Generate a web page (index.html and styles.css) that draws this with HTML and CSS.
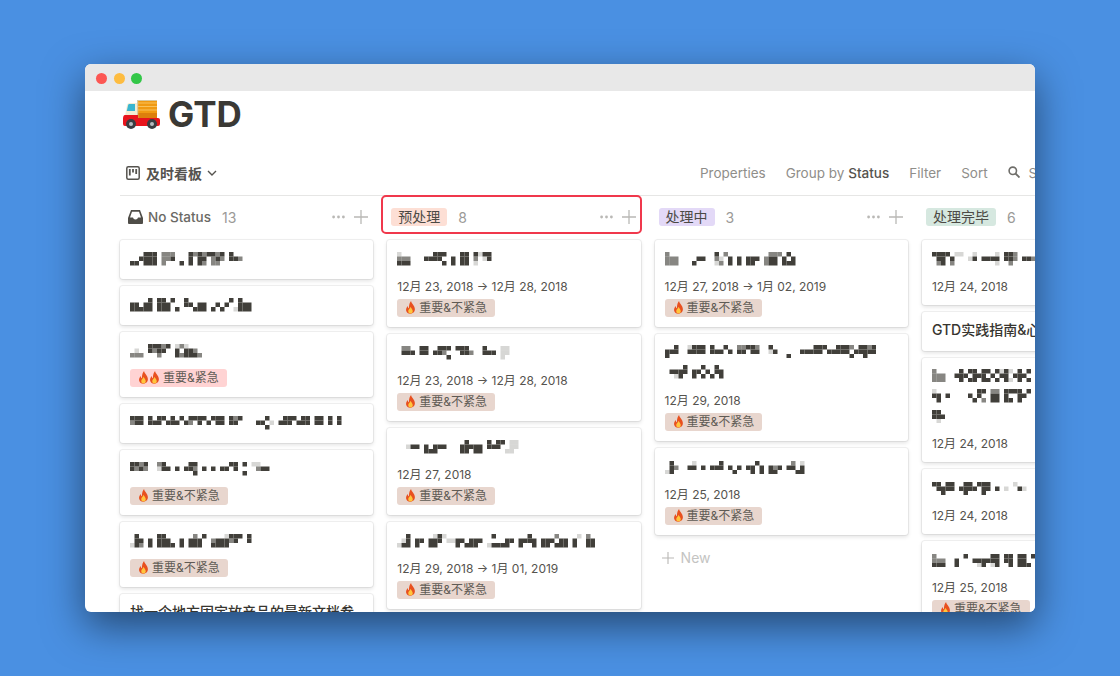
FILE: index.html
```html
<!DOCTYPE html>
<html lang="en">

<head>
    <meta charset="UTF-8" />
    <title>GTD</title>
    <link rel="stylesheet" href="styles.css">
</head>

<body>

    <svg class="defs" width="0" height="0">
        <symbol id="fire" viewBox="0 0 12 14">
            <path fill="#e8501f" d="M6.6 0C7 3 10.800 5 10.800 9a4.900 4.900 0 0 1-9.600 1.200C.9 8 2 6.500 3 5.300c0 1.400.6 2.200 1.400 2.400C4.100 5 4.900 2 6.600 0z" />
            <path fill="#ffc53d" d="M6.100 6.200c.3 1.500 2.400 2.800 2.400 4.800a2.500 2.500 0 0 1-5 0c0-1.900 2.100-3 2.600-4.800z" />
        </symbol>
        <symbol id="plus" viewBox="0 0 14 14">
            <path d="M7 0v14M0 7h14" stroke="#b9b8b5" stroke-width="1.300" fill="none" />
        </symbol>
        <symbol id="dots" viewBox="0 0 13 4">
            <circle cx="1.600" cy="2" r="1.400" fill="#b9b8b5" />
            <circle cx="6.500" cy="2" r="1.400" fill="#b9b8b5" />
            <circle cx="11.400" cy="2" r="1.400" fill="#b9b8b5" />
        </symbol>
    </svg>

    <div class="window">
        <div class="titlebar">
            <span class="light red"></span>
            <span class="light yellow"></span>
            <span class="light green"></span>
        </div>

        <div class="page-title">
            <svg class="truck" width="38" height="30" viewBox="0 0 38 30">
                <rect x="15" y="1" width="20" height="20" fill="#f09a12" />
                <path d="M15 4h20M15 7.500h20M15 11h20" stroke="#f9c25a" stroke-width="1.200" />
                <rect x="15" y="14" width="20" height="6" fill="#dd7f0c" />
                <path d="M15 1h20v1H15zM15 1h1.200v20H15z" fill="#d9c9a0" />
                <path d="M3 17l2-11q.5-2 2.500-2H15v15H3z" fill="#f3ecd2" />
                <path d="M4.800 12l1.300-6q.3-1 1.300-1H13v7z" fill="#39b6d0" />
                <path d="M1 20q0-4 2-4h13v3h20q2 0 2 2v4q0 2-2 2H3q-2 0-2-2z" fill="#e8141c" />
                <circle cx="9" cy="25" r="5" fill="#3a3e42" />
                <circle cx="9" cy="25" r="2" fill="#b7bcc0" />
                <circle cx="30" cy="25" r="5" fill="#3a3e42" />
                <circle cx="30" cy="25" r="2" fill="#b7bcc0" />
            </svg>
            <h1>GTD</h1>
        </div>

        <div class="toolbar">
            <div class="views">
                <svg width="14" height="14" viewBox="0 0 14 14" fill="none">
                    <rect x=".8" y=".8" width="12.400" height="12.400" rx="1.500" stroke="#55534e" stroke-width="1.500" />
                    <path d="M3.800 3v6.500M7 3v3.500M10.200 3v5" stroke="#55534e" stroke-width="1.800" />
                </svg>
                <span class="view-name">及时看板</span>
                <svg width="10" height="6" viewBox="0 0 10 6" fill="none">
                    <path d="M1 1l4 4 4-4" stroke="#55534e" stroke-width="1.400" />
                </svg>
            </div>
            <div class="actions">
                <span>Properties</span>
                <span>Group by <b>Status</b></span>
                <span>Filter</span>
                <span>Sort</span>
                <span class="search">
                    <svg width="12" height="12" viewBox="0 0 12 12" fill="none">
                        <circle cx="4.800" cy="4.800" r="3.700" stroke="#6f6e6a" stroke-width="1.600" />
                        <path d="M7.500 7.500l4 4" stroke="#6f6e6a" stroke-width="1.800" />
                    </svg>
                    Search
                </span>
            </div>
        </div>

        <div class="board">
            <div class="column">
                <div class="col-head first">
                    <svg class="inbox" width="15" height="14" viewBox="0 0 15 14">
                        <path fill="#4f4d48" d="M3 0h9l3 8v5a1 1 0 0 1-1 1H1a1 1 0 0 1-1-1V8z" />
                        <path fill="#fff" d="M4 1.800h7l2 5.700h-3c-.3 1.300-1.200 2-2.500 2S5.300 8.800 5 7.500H2z" />
                    </svg>
                    <span class="col-name">No Status</span>
                    <span class="count">13</span>
                    <span class="col-tools">
                        <svg width="13" height="4"><use href="#dots" /></svg>
                        <svg width="14" height="14"><use href="#plus" /></svg>
                    </span>
                </div>
                <div class="card"><div class="card-title"><span class="mosaic" data-rows="...###.bbb...#b#b##b#.#..|..####.bb#...#.##.b#b.##b|##.###.b...#.#.#b.bb....."></span></div></div>
                <div class="card"><div class="card-title"><span class="mosaic" data-rows="....#.##.#..#.........#.#..|##.##.###...##.##..#.#..###|#####.###.#...###.#.#..a###"></span></div></div>
                <div class="card">
                    <div class="card-title"><span class="mosaic" data-rows="....###b#.aba.....|.a..#b##..#.##b...|bbb...b...#b###b.."></span></div>
                    <span class="tag urgent"><svg width="11" height="13"><use href="#fire" /></svg><svg width="11" height="13"><use href="#fire" /></svg>重要&amp;紧急</span>
                </div>
                <div class="card"><div class="card-title"><span class="mosaic" data-rows="###.#.##.#.#.####.###.#b#.....#...###.##.##.#.#|b##.###.###.#b.#.#.##.##....##.a.###.###.##.#.#|..............................#.................."></span></div></div>
                <div class="card">
                    <div class="card-title"><span class="mosaic" data-rows="##b#..b#.....##.......##.#.aa..|#b#b..a##.#.##b.#.#.##.#....b##|..............#..........#......"></span></div>
                    <span class="tag"><svg width="11" height="13"><use href="#fire" /></svg>重要&amp;不紧急</span>
                </div>
                <div class="card">
                    <div class="card-title"><span class="mosaic" data-rows=".#....##......b.#....a###.#|.##.#.###..#.###..b###b#..#|a#b.#.####.#.###..####....."></span></div>
                    <span class="tag"><svg width="11" height="13"><use href="#fire" /></svg>重要&amp;不紧急</span>
                </div>
                <div class="card"><div class="card-title">找一个地方固定放产品的最新文档参</div></div>
            </div>

            <div class="column">
                <div class="col-head">
                    <span class="chip peach">预处理</span>
                    <span class="count">8</span>
                    <span class="col-tools">
                        <svg width="13" height="4"><use href="#dots" /></svg>
                        <svg width="14" height="14"><use href="#plus" /></svg>
                    </span>
                    <div class="highlight"></div>
                </div>
                <div class="card">
                    <div class="card-title"><span class="mosaic" data-rows="a.......###...##.#a##|bbb...####..#.##.b.a#|###.......#.#.##.a.."></span></div>
                    <div class="card-date">12月 23, 2018 → 12月 28, 2018</div>
                    <span class="tag"><svg width="11" height="13"><use href="#fire" /></svg>重要&amp;不紧急</span>
                </div>
                <div class="card">
                    <div class="card-title"><span class="mosaic" data-rows=".bb..##..###.###...#...aa|.###.##.##b...##b..###.aa.|...........#...........a"></span></div>
                    <div class="card-date">12月 23, 2018 → 12月 28, 2018</div>
                    <span class="tag"><svg width="11" height="13"><use href="#fire" /></svg>重要&amp;不紧急</span>
                </div>
                <div class="card">
                    <div class="card-title"><span class="mosaic" data-rows="...............#....#.##.aa|..a##.#.###...#####.###..aa|......###.....##.##.....aa"></span></div>
                    <div class="card-date">12月 27, 2018</div>
                    <span class="tag"><svg width="11" height="13"><use href="#fire" /></svg>重要&amp;不紧急</span>
                </div>
                <div class="card">
                    <div class="card-title"><span class="mosaic" data-rows="..#.....a#a..........#.......#.....b....a.b..|.a#.##.###.aa##.###.....##.####.###.##.#..##|a##.#..##....#.###..a####..#..#.##.###.#..##"></span></div>
                    <div class="card-date">12月 29, 2018 → 1月 01, 2019</div>
                    <span class="tag"><svg width="11" height="13"><use href="#fire" /></svg>重要&amp;不紧急</span>
                </div>
            </div>

            <div class="column">
                <div class="col-head">
                    <span class="chip lilac">处理中</span>
                    <span class="count">3</span>
                    <span class="col-tools">
                        <svg width="13" height="4"><use href="#dots" /></svg>
                        <svg width="14" height="14"><use href="#plus" /></svg>
                    </span>
                </div>
                <div class="card">
                    <div class="card-title"><span class="mosaic" data-rows="b..........#.b.........bbb.#..|bbb....##..ba.#.#.###.b##.#.#|bbb...#....ab.#.#.##..b##.###"></span></div>
                    <div class="card-date">12月 27, 2018 → 1月 02, 2019</div>
                    <span class="tag"><svg width="11" height="13"><use href="#fire" /></svg>重要&amp;不紧急</span>
                </div>
                <div class="card">
                    <div class="card-title two-lines"><span class="mosaic" data-rows="..#..a###.#..#..bb##b..#.........###..###b.##b#|###..####.###.#.##.##..a#.....#####.#####.#####|#..........................#.............#..#.."></span><span class="mosaic" data-rows="....#...#..#..|.####.##.#.##.|..a#..#.#.#.#."></span></div>
                    <div class="card-date">12月 29, 2018</div>
                    <span class="tag"><svg width="11" height="13"><use href="#fire" /></svg>重要&amp;不紧急</span>
                </div>
                <div class="card">
                    <div class="card-title"><span class="mosaic" data-rows=".#....a.....#.......#.......b.a.|.#b..##.#.###.#.#.##.#.#b#.##.#|a#.............#...#.#.##....##"></span></div>
                    <div class="card-date">12月 25, 2018</div>
                    <span class="tag"><svg width="11" height="13"><use href="#fire" /></svg>重要&amp;不紧急</span>
                </div>
                <div class="add-new">
                    <svg width="12" height="12"><use href="#plus" /></svg>
                    New
                </div>
            </div>

            <div class="column">
                <div class="col-head">
                    <span class="chip mint">处理完毕</span>
                    <span class="count">6</span>
                </div>
                <div class="card">
                    <div class="card-title"><span class="mosaic" data-rows="####.aa..a....a.##b.....|.##.#...a#.####.##b.##b#|.b#.b.........a..b......"></span></div>
                    <div class="card-date">12月 24, 2018</div>
                </div>
                <div class="card"><div class="card-title">GTD实践指南&amp;心得体会</div></div>
                <div class="card">
                    <div class="card-title three-lines"><span class="mosaic" data-rows="b.....#.##.##.#a#a.#.#|bbb..###.###.#.##.###.|bbb...#.##.##.#.#a.#.#"></span><span class="mosaic" data-rows="a.........##.bb.####.#|##.#....#.#..##.#..##.|.#.......#.b.##.##.#."></span><span class="mosaic" data-rows="##.|###|.a."></span></div>
                    <div class="card-date">12月 24, 2018</div>
                </div>
                <div class="card">
                    <div class="card-title"><span class="mosaic" data-rows="##.##..##.###.....a..|.####.####.##.#.a..#a|..#....#...#.........."></span></div>
                    <div class="card-date">12月 24, 2018</div>
                </div>
                <div class="card">
                    <div class="card-title"><span class="mosaic" data-rows="b......#.....##.##.##.#|bbb..#...######.##.##|###..#....a#.a#..#.###"></span></div>
                    <div class="card-date">12月 25, 2018</div>
                    <span class="tag"><svg width="11" height="13"><use href="#fire" /></svg>重要&amp;不紧急</span>
                </div>
            </div>
        </div>
    </div>

    <script src="mosaic.js"></script>

</body>

</html>
```

FILE: styles.css
```css
* {
    box-sizing: border-box;
}

body {
    margin: 0;
    padding: 64px 85px;
    height: 676px;
    overflow: hidden;
    background-color: #4a90e2;
    font-family: Inter, "Noto Sans CJK SC", sans-serif;
    color: #37352f;
}

.defs {
    position: absolute;
}

.window {
    height: 548px;
    background-color: #fff;
    border-radius: 6px;
    box-shadow: 0 14px 40px rgba(0, 0, 0, 0.5);
    overflow: hidden;
}

.titlebar {
    display: flex;
    align-items: center;
    gap: 6.500px;
    height: 27px;
    padding: 1px 0 0 11px;
    background-color: #e8e8e8;
}

.light {
    width: 11px;
    height: 11px;
    border-radius: 50%;
}

.red {
    background-color: #fc5753;
}

.yellow {
    background-color: #fdbc40;
}

.green {
    background-color: #33c748;
}

.page-title {
    display: flex;
    align-items: center;
    gap: 8px;
    height: 47px;
    padding-left: 37px;
}

.truck {
    flex: none;
    margin-top: -1px;
}

h1 {
    margin: 0;
    font-size: 35px;
    font-weight: 700;
    line-height: 47px;
    color: #3a3935;
}

.toolbar {
    display: flex;
    align-items: center;
    height: 58px;
    margin-left: 35px;
    padding: 12px 0 0 6px;
    border-bottom: 1px solid #e6e6e5;
    font-size: 13.500px;
    white-space: nowrap;
}

.views {
    display: flex;
    align-items: center;
    flex: none;
    width: 574px;
    font-size: 14px;
    color: #55534e;
}

.view-name {
    margin: 0 5px 0 6px;
    font-weight: 600;
}

.actions {
    display: flex;
    align-items: center;
    flex: none;
    gap: 20px;
    color: #8f8e8a;
}

.actions b {
    font-weight: 500;
    color: #55534e;
}

.search svg {
    margin-right: 5px;
}

.board {
    display: flex;
    gap: 14px;
    margin-left: 35px;
}

.column {
    flex: none;
    width: 253.300px;
}

.col-head {
    position: relative;
    display: flex;
    align-items: center;
    height: 44px;
    padding: 0 5px 2px 4px;
    font-size: 14px;
}

.col-head.first {
    padding-left: 8px;
}

.inbox {
    margin-right: 5px;
}

.col-name {
    font-size: 13.500px;
    font-weight: 500;
    color: #6a6964;
}

.chip {
    padding: 0 7px;
    height: 18px;
    line-height: 18px;
    border-radius: 3px;
    color: #4c4a45;
}

.peach {
    background-color: #fddfd5;
}

.lilac {
    background-color: #e3d9f7;
}

.mint {
    background-color: #d6e8e0;
}

.count {
    margin-left: 11px;
    color: #9b9a97;
}

.col-tools {
    display: flex;
    align-items: center;
    gap: 9px;
    margin-left: auto;
}

.highlight {
    position: absolute;
    top: -1px;
    left: -6px;
    right: -1px;
    bottom: 6px;
    border: 2.500px solid #f0384c;
    border-radius: 5px;
}

.card {
    margin-bottom: 7.200px;
    padding: 8px 10px 10px;
    background-color: #fff;
    border-radius: 3px;
    box-shadow: 0 0 0 1px rgba(15, 15, 15, 0.06), 0 2px 4px rgba(15, 15, 15, 0.12);
    font-size: 12px;
}

.card-title {
    min-height: 20.800px;
    font-size: 14px;
    font-weight: 500;
    line-height: 20.800px;
    white-space: nowrap;
    overflow: hidden;
}

.card-title + * {
    margin-top: 8px;
}

.two-lines .mosaic,
.three-lines .mosaic {
    display: block;
    height: 20.500px;
    padding-top: 3px;
}

.three-lines {
    height: 60px;
}

.mosaic {
    display: inline-block;
    vertical-align: middle;
    filter: blur(0.4px);
}

.mosaic svg {
    display: block;
}

.card-date {
    height: 18px;
    margin-bottom: 4px;
    line-height: 20px;
    color: #55534e;
    white-space: nowrap;
}

.card-date:last-child {
    margin-bottom: 0;
}

.tag {
    display: inline-flex;
    align-items: center;
    height: 18px;
    padding: 0 8px;
    border-radius: 3px;
    background-color: #e8d6ce;
    color: #5f5b55;
    line-height: 18px;
    vertical-align: top;
}

.tag svg {
    flex: none;
}

.tag svg:last-of-type {
    margin-right: 3px;
}

.tag.urgent {
    background-color: #ffd3d3;
}

.add-new {
    display: flex;
    align-items: center;
    gap: 7px;
    padding: 7px;
    font-size: 14px;
    color: #c4c4c2;
}
```

FILE: mosaic.js
```js
// titles are pixelated in the screenshot, draw them from row patterns
const CELL = 4.5;
const SHADES = { a: 0.2, b: 0.6, "#": 0.95 };

document.querySelectorAll(".mosaic").forEach(function (el) {
    const rows = el.dataset.rows.split("|").filter(r => r.length);
    const cols = Math.max(...rows.map(r => r.length));
    let rects = "";

    rows.forEach(function (row, y) {
        row.split("").forEach(function (ch, x) {
            if (SHADES[ch]) {
                rects += '<rect x="' + x * CELL + '" y="' + y * CELL + '" width="' + CELL + '" height="' + CELL +
                    '" fill="#37352f" fill-opacity="' + SHADES[ch] + '"/>';
            }
        });
    });

    el.innerHTML = '<svg width="' + cols * CELL + '" height="' + rows.length * CELL + '">' + rects + "</svg>";
});
```
